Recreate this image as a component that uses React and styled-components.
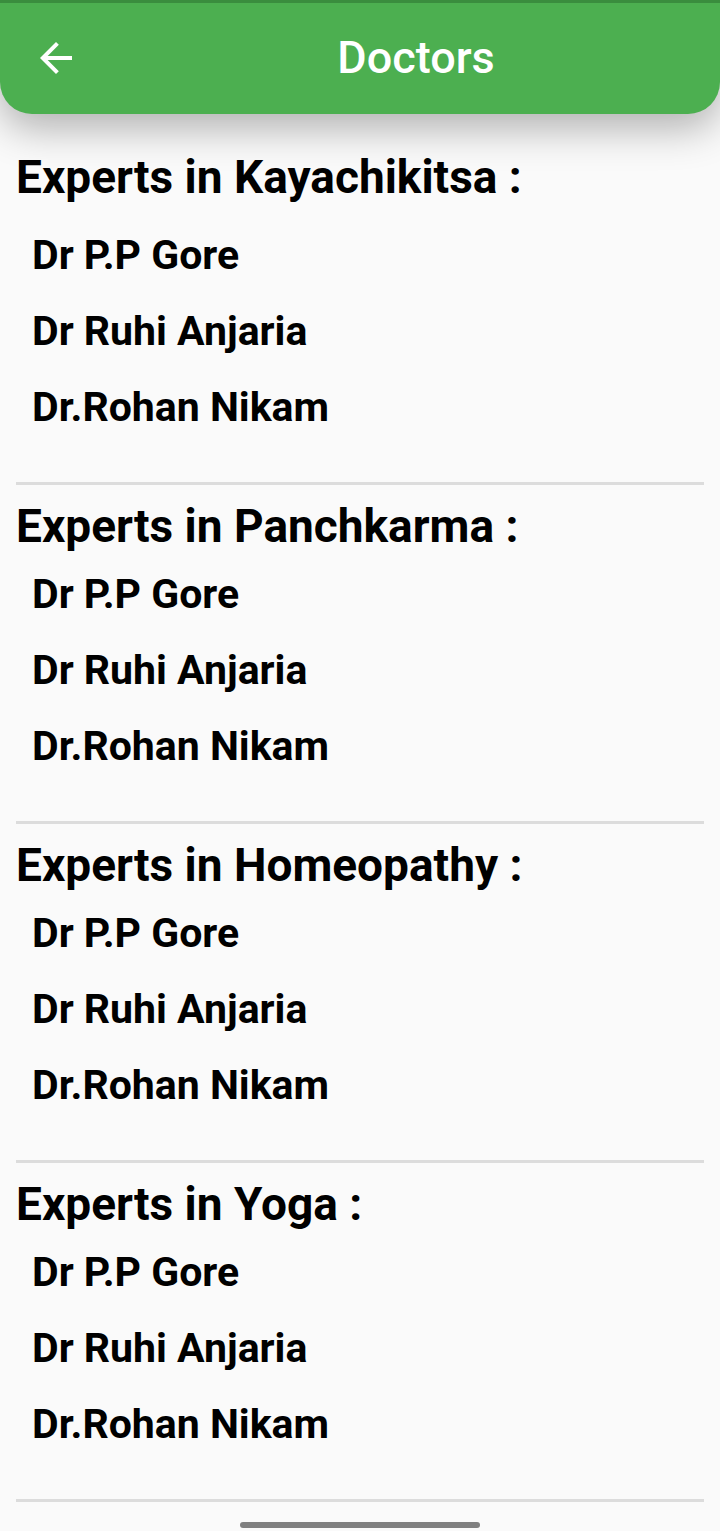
import React from 'react'
import styled, { createGlobalStyle } from 'styled-components'

const GlobalStyle = createGlobalStyle`
    html, body {
        margin: 0;
        padding: 0;
        background: #fafafa;
    }

    body {
        font-family: Roboto, "Noto Sans", "Liberation Sans", sans-serif;
        color: #000;
    }
`

const Screen = styled.div`
    position: relative;
    min-height: 1531px;
    background: #fafafa;
    overflow: hidden;
`

const AppBar = styled.header`
    position: relative;
    z-index: 2;
    display: grid;
    grid-template-columns: 112px 1fr;
    align-items: center;
    height: 111px;
    background: #4caf50;
    border-top: 3px solid #3a8d3e;
    border-radius: 0 0 32px 32px;
    box-shadow: 0 14px 40px rgba(0, 0, 0, 0.3);
`

const BackButton = styled.button`
    justify-self: center;
    display: flex;
    align-items: center;
    justify-content: center;
    width: 48px;
    height: 48px;
    padding: 0;
    margin-top: -1px;
    background: transparent;
    border: none;
`

const Title = styled.h1`
    margin: 0;
    text-align: center;
    color: #fff;
    font-size: 45px;
    font-weight: 500;
    line-height: 1.172;
`

const Content = styled.main`
    padding: 0 16px;
`

const Section = styled.section`
    padding-top: ${({ $first }) => ($first ? '35px' : '13px')};
`

const Heading = styled.h2`
    margin: 0 0 ${({ $first }) => ($first ? '12px' : '2px')};
    font-size: 46px;
    font-weight: 700;
    line-height: 56px;
`

const DoctorList = styled.ul`
    list-style: none;
    margin: 0;
    padding: 0 0 0 16px;
`

const Doctor = styled.li`
    font-size: 41px;
    font-weight: 700;
    line-height: 76px;
`

const Divider = styled.hr`
    height: 3px;
    margin: 37px 0 0;
    border: none;
    background: #dcdcdc;
`

const HomeIndicator = styled.div`
    position: absolute;
    left: 240px;
    bottom: 3px;
    width: 240px;
    height: 6px;
    border-radius: 3px;
    background: #808080;
`

const ArrowBack = () => (
    <svg width="48" height="48" viewBox="0 0 24 24" fill="#fff">
        <path d="M20 11H7.83l5.59-5.59L12 4l-8 8 8 8 1.41-1.41L7.83 13H20v-2z" />
    </svg>
)

const doctors = ['Dr P.P Gore', 'Dr Ruhi Anjaria', 'Dr.Rohan Nikam']

const fields = ['Kayachikitsa', 'Panchkarma', 'Homeopathy', 'Yoga']

function App() {
    return (
        <Screen>
            <GlobalStyle />
            <AppBar>
                <BackButton aria-label="Back">
                    <ArrowBack />
                </BackButton>
                <Title>Doctors</Title>
            </AppBar>
            <Content>
                {fields.map((field, i) => (
                    <Section key={field} $first={i === 0}>
                        <Heading $first={i === 0}>Experts in {field} :</Heading>
                        <DoctorList>
                            {doctors.map((name) => (
                                <Doctor key={name}>{name}</Doctor>
                            ))}
                        </DoctorList>
                        <Divider />
                    </Section>
                ))}
            </Content>
            <HomeIndicator />
        </Screen>
    )
}

export default App
